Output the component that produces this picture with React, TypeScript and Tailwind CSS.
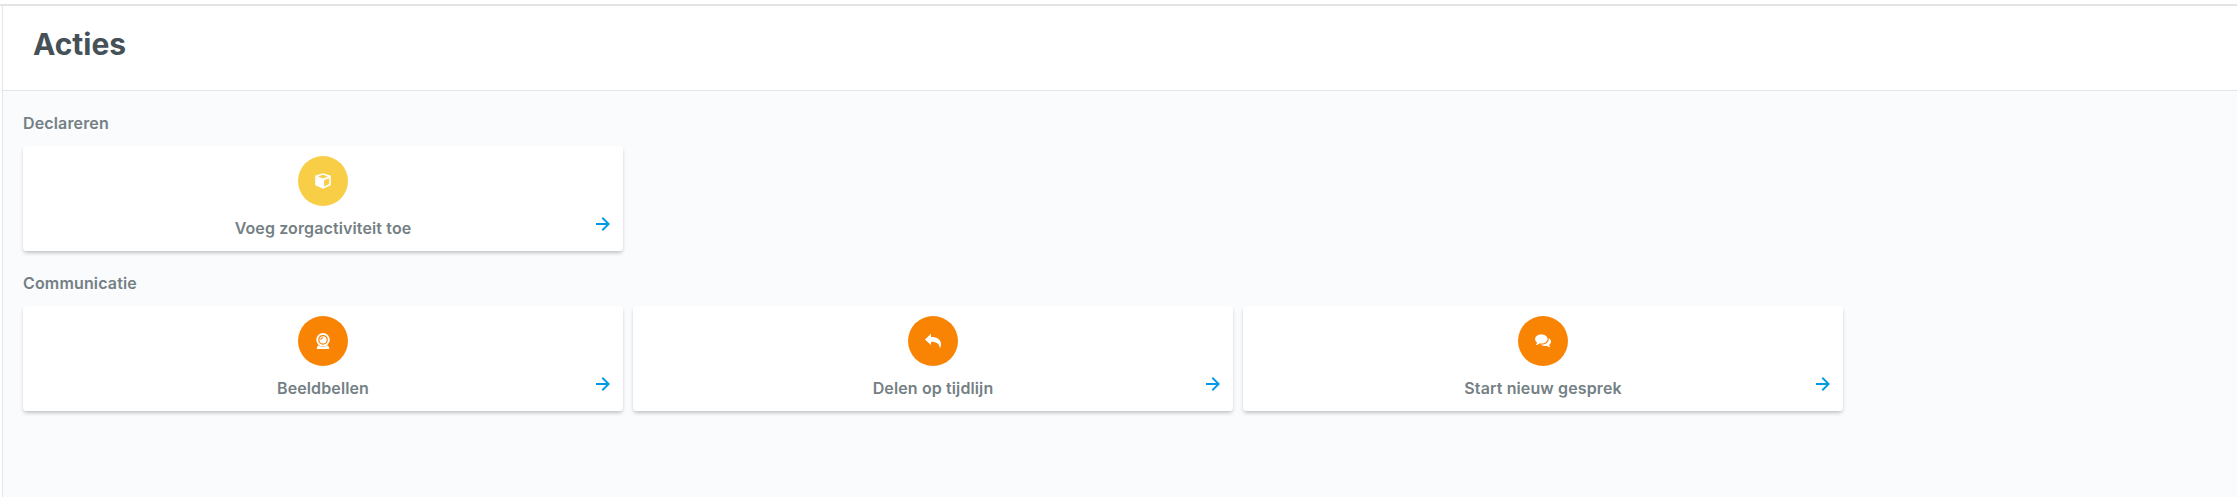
import type { ReactNode } from 'react';

type Action = {
    label: string;
    icon: ReactNode;
    color: string;
};

type Section = {
    title: string;
    actions: Action[];
};

const CubeIcon = () => (
    <svg viewBox="0 0 16 16" className="w-4 h-4" fill="currentColor">
        <path fillRule="evenodd" d="M8 0.2 L15.4 2.6 Q15.8 2.8 15.8 3.3 V11.6 Q15.8 12.2 15.3 12.5 L8 15.8 L0.7 12.5 Q0.2 12.2 0.2 11.6 V3.3 Q0.2 2.8 0.6 2.6 Z M8 1.7 L3 3.5 L8 5.4 L13 3.5 Z M9.1 7.2 V13.4 L14.2 11.1 V5.2 Z" />
    </svg>
);

const WebcamIcon = () => (
    <svg viewBox="0 0 16 16" className="w-4 h-4" fill="currentColor">
        <circle cx="8" cy="6.8" r="5.8" fill="none" stroke="currentColor" strokeWidth="1.9" />
        <circle cx="8" cy="6.8" r="3.6" />
        <path d="M5.9 6.8 A2.1 2.1 0 0 1 8 4.7" fill="none" stroke="#f98404" strokeWidth="1.1" />
        <path d="M3.2 12.3 Q8 15.2 12.8 12.3 Q14.3 13.8 14.3 16 H1.7 Q1.7 13.8 3.2 12.3 Z" />
    </svg>
);

const ReplyIcon = () => (
    <svg viewBox="0 0 16 16" className="w-4 h-4" fill="currentColor">
        <path d="M6 0.8 V4 C12.5 4 16 6.5 16 11.5 C16 13 15.6 14.3 14.8 15.2 C14.6 11 12 8.8 6 8.8 V12 L0 6.4 Z" />
    </svg>
);

const ChatIcon = () => (
    <svg viewBox="0 0 16 16" className="w-4 h-4" fill="currentColor">
        <path d="M6.4 1.6 C9.9 1.6 12.6 3.5 12.6 6.1 C12.6 8.7 9.9 10.6 6.4 10.6 C5.8 10.6 5.2 10.5 4.6 10.4 C3.6 11.3 2.2 11.9 0.8 11.9 C1.5 11.2 1.9 10.4 2 9.5 C0.8 8.7 0.1 7.5 0.1 6.1 C0.1 3.5 2.8 1.6 6.4 1.6 Z" />
        <path d="M13.7 5 C15.1 5.7 16 7 16 8.5 C16 9.8 15.3 11 14.2 11.8 C14.2 12.6 14.6 13.5 15.3 14.2 C13.9 14.1 12.6 13.5 11.6 12.7 C9.1 13.2 6.7 12.6 5.3 11.6 C10 11.9 14.4 9.5 13.7 5 Z" />
    </svg>
);

const ArrowIcon = () => (
    <svg viewBox="0 0 14 14" className="w-3.5 h-3.5" fill="none" stroke="currentColor" strokeWidth="1.9">
        <path d="M0 7 H13 M6.3 0.7 L12.7 7 L6.3 13.3" />
    </svg>
);

const SECTIONS: Section[] = [
    {
        title: 'Declareren',
        actions: [{ label: 'Voeg zorgactiviteit toe', icon: <CubeIcon />, color: 'bg-[#f7ce46]' }],
    },
    {
        title: 'Communicatie',
        actions: [
            { label: 'Beeldbellen', icon: <WebcamIcon />, color: 'bg-[#f98404]' },
            { label: 'Delen op tijdlijn', icon: <ReplyIcon />, color: 'bg-[#f98404]' },
            { label: 'Start nieuw gesprek', icon: <ChatIcon />, color: 'bg-[#f98404]' },
        ],
    },
];

function ActionCard({ label, icon, color }: Action) {
    return (
        <button className="relative w-[600px] h-[105px] pt-2.5 flex flex-col items-center rounded-[3px] bg-white shadow-[0_3px_4px_-1px_rgba(0,0,0,0.2),0_1px_3px_rgba(0,0,0,0.06)]">
            <span className={`w-[50px] h-[50px] rounded-full flex items-center justify-center text-white ${color}`}>
                {icon}
            </span>
            <span className="mt-3 text-base leading-5 font-semibold tracking-[0.12px] text-[#748084]">{label}</span>
            <span className="absolute right-[13px] bottom-5 text-[#0099e5]">
                <ArrowIcon />
            </span>
        </button>
    );
}

export default function App() {
    return (
        <div className="h-[497px] pt-1 flex flex-col overflow-hidden bg-white font-['Inter',sans-serif]">
            <div className="flex-1 border-t-2 border-[#e3e4e6] flex flex-col">
                <div className="flex-1 ml-0.5 border-l border-[#dfe6ec] flex flex-col">
                    <header className="h-[85px] pl-[30px] pt-[18px] border-b border-[#dfe6ec]">
                        <h1 className="text-[30px] leading-10 font-bold text-[#455057]">Acties</h1>
                    </header>
                    <main className="flex-1 pl-5 pt-5 bg-[#fafbfd]">
                        {SECTIONS.map((section) => (
                            <section key={section.title} className="mb-5">
                                <h2 className="mb-[11px] text-base leading-6 font-semibold tracking-[0.15px] text-[#748084]">
                                    {section.title}
                                </h2>
                                <div className="flex gap-2.5">
                                    {section.actions.map((action) => (
                                        <ActionCard key={action.label} {...action} />
                                    ))}
                                </div>
                            </section>
                        ))}
                    </main>
                </div>
            </div>
        </div>
    );
}
